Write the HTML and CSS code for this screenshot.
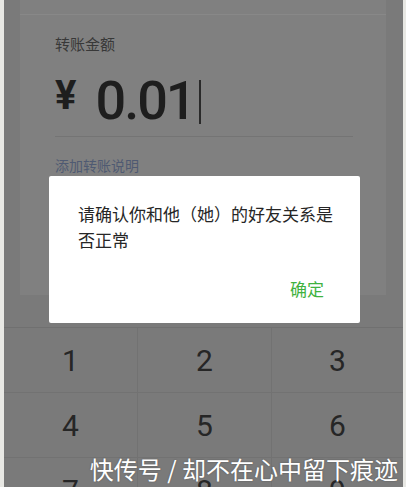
FILE: index.html
```html
<html><head>
	<meta charset="utf-8">
	<title>转账</title>
	<link rel="stylesheet" href="styles.css">
</head>
<body>
	<div id="frame">
		<div id="screen">
			<div class="topStrip"></div>
			<div class="card">
				<div class="label">转账金额</div>
				<div class="amount">
					<span class="yen">¥</span>
					<span class="value">0.01</span>
					<span class="cursor"></span>
				</div>
				<div class="divider"></div>
				<div class="addNote">添加转账说明</div>
			</div>

			<div class="keypad">
				<div class="key">1</div>
				<div class="key">2</div>
				<div class="key">3</div>
				<div class="key">4</div>
				<div class="key">5</div>
				<div class="key">6</div>
				<div class="key">7</div>
				<div class="key">8</div>
				<div class="key">9</div>
			</div>

			<div class="dialog">
				<div class="dialogText">请确认你和他（她）的好友关系是否正常</div>
				<div class="dialogBtns"><span class="okBtn">确定</span></div>
			</div>

			<div class="watermark">快传号 / 却不在心中留下痕迹</div>
		</div>
	</div>
</body></html>
```

FILE: styles.css
```css
		html, body {
			margin: 0;
			padding: 0;
			background: #e8e8e4;
			font-family: Roboto, "Noto Sans CJK SC", sans-serif;
		}
		#frame {
			padding: 0 3px 0 4px;
			height: 487px;
			overflow: hidden;
		}
		#screen {
			position: relative;
			height: 487px;
			overflow: hidden;
			background: #7a7a7a;
		}
		.topStrip {
			margin: 0 17px 0 16px;
			height: 14px;
			background: #808080;
			border-bottom: 1px solid #888888;
		}
		.card {
			margin: 0 17px 0 16px;
			height: 280px;
			padding: 0 33px 0 35px;
			background: #808080;
			box-sizing: border-box;
		}
		.card .label {
			padding-top: 19px;
			font-family: "Noto Sans CJK SC", sans-serif;
			font-size: 15px;
			line-height: 20px;
			color: #383838;
		}
		.amount {
			display: flex;
			align-items: flex-start;
			margin-top: 20px;
			height: 54px;
			color: #1e1e1e;
		}
		.amount .yen {
			margin-top: 2px;
			margin-right: 19px;
			font-size: 40px;
			line-height: 40px;
			font-weight: 700;
		}
		.amount .value {
			font-size: 54px;
			line-height: 54px;
			font-weight: 500;
			letter-spacing: -2px;
		}
		.amount .cursor {
			width: 2px;
			height: 44px;
			margin-top: 6px;
			margin-left: 4px;
			background: #2a2a2a;
		}
		.divider {
			margin-top: 8px;
			height: 1px;
			background: #747474;
		}
		.addNote {
			margin-top: 18px;
			font-family: "Noto Sans CJK SC", sans-serif;
			font-size: 14px;
			line-height: 20px;
			color: #4f5a72;
		}

		.keypad {
			margin-top: 32px;
			display: grid;
			grid-template-columns: 134px 134px 1fr;
			grid-auto-rows: 65px;
			border-top: 1px solid #707070;
		}
		.key {
			display: flex;
			align-items: center;
			justify-content: center;
			font-size: 30px;
			font-weight: 400;
			color: #262626;
			border-right: 1px solid #727272;
			border-bottom: 1px solid #727272;
		}
		.key:nth-child(3n) {
			border-right: none;
		}

		.dialog {
			position: absolute;
			left: 45px;
			top: 176px;
			width: 311px;
			height: 147px;
			background: #ffffff;
			border-radius: 2px;
			box-sizing: border-box;
			padding: 25px 27px 0 29px;
			font-family: "Noto Sans CJK SC", sans-serif;
		}
		.dialogText {
			font-size: 17px;
			line-height: 26px;
			color: #262626;
		}
		.dialogBtns {
			margin-top: 23px;
			padding-right: 9px;
			text-align: right;
			font-size: 17px;
			line-height: 26px;
		}
		.okBtn {
			color: #3fb23f;
		}

		.watermark {
			position: absolute;
			right: 5px;
			top: 454px;
			font-family: "Noto Sans CJK SC", sans-serif;
			font-size: 24px;
			line-height: 30px;
			color: #ffffff;
			text-shadow: 0 0 2px rgba(0,0,0,0.3);
			white-space: nowrap;
		}
```
